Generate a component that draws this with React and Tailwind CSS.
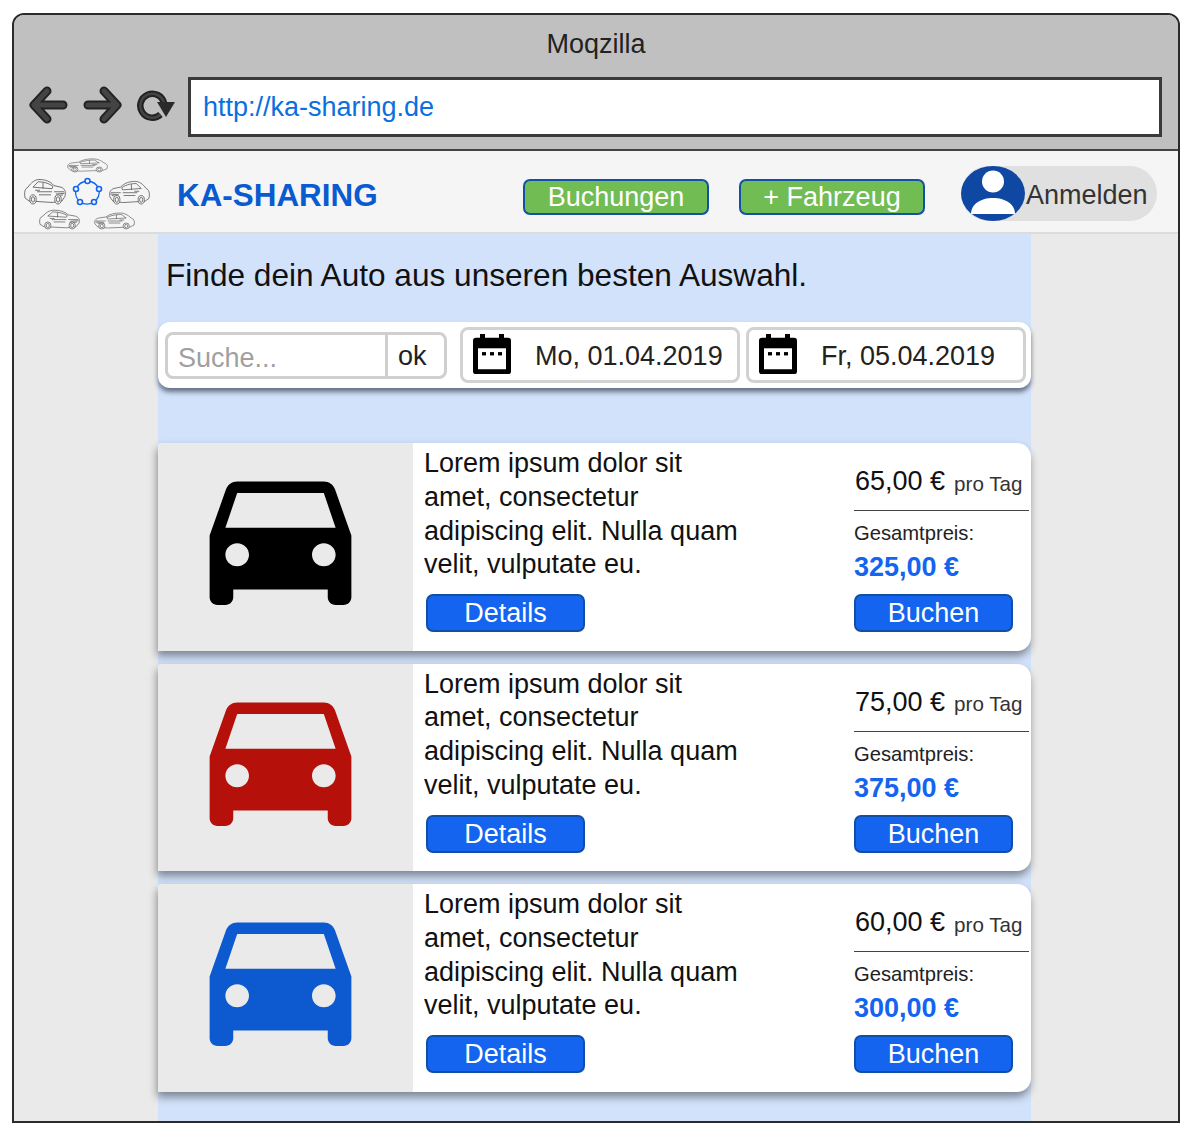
const font = { fontFamily: '"Liberation Sans", Arial, sans-serif' }

const cars = [
  { color: '#000000', perDay: '65,00 €', total: '325,00 €' },
  { color: '#b5100a', perDay: '75,00 €', total: '375,00 €' },
  { color: '#0d5ad0', perDay: '60,00 €', total: '300,00 €' },
]

function NavArrow({ flip }) {
  return (
    <svg width="40" height="38" viewBox="0 0 40 38" className={flip ? '-scale-x-100 mb-[4px]' : 'mb-[4px]'}>
      <path
        d="M18 5 L5 19 L18 33 M5 19 L34 19"
        fill="none"
        stroke="#222"
        strokeWidth="9"
        strokeLinecap="round"
        strokeLinejoin="round"
      />
      <path
        d="M18 5 L5 19 L18 33 M5 19 L34 19"
        fill="none"
        stroke="#444"
        strokeWidth="5"
        strokeLinecap="round"
        strokeLinejoin="round"
      />
    </svg>
  )
}

function Reload() {
  return (
    <svg width="40" height="36" viewBox="0 0 40 36" className="mb-[2px]">
      <path d="M27 15 A12 12 0 1 0 23.5 26.5" fill="none" stroke="#222" strokeWidth="6.5" />
      <path d="M27 15 A12 12 0 1 0 23.5 26.5" fill="none" stroke="#444" strokeWidth="2.5" />
      <path d="M20 14 L38 14 L29 29 Z" fill="#2a2a2a" />
    </svg>
  )
}

// thin outline of a car, used for the five sketches in the logo
function Sketch({ x, y, w, h, flip }) {
  const sx = w / 42
  const sy = h / 17
  const tf = flip ? `translate(${x + w} ${y}) scale(${-sx} ${sy})` : `translate(${x} ${y}) scale(${sx} ${sy})`
  return (
    <g transform={tf} fill="none" stroke="#3a3a3a" strokeWidth="0.55" strokeLinejoin="round">
      <path d="M1 12 C0 9 1 7 5 6 L12 5 C16 2 21 1 27 1 C31 1 35 3 38 6 C41 7 42 9 41 13 L37 15 L14 16 L4 15 Z" />
      <path d="M13 5.5 C18 3 24 2.5 28 2.5 L33 6 L14 7 Z" />
      <path d="M23 3 L23 7 M2 9 L12 9 M3 11 L11 12 M15 11 L27 11 M26 8 L31 8 M1.5 10 L10 10.5 M14 9 L29 9" />
      <ellipse cx="8" cy="14" rx="3.2" ry="3" fill="#f5f5f5" />
      <ellipse cx="8" cy="14" rx="1.6" ry="1.8" />
      <ellipse cx="33" cy="14" rx="3.2" ry="3" fill="#f5f5f5" />
      <ellipse cx="33" cy="14" rx="1.6" ry="1.8" />
    </g>
  )
}

function Logo() {
  return (
    <svg width="130" height="76" viewBox="23 154 130 76" className="shrink-0">
      <Sketch x={67} y={158} w={41} h={14} />
      <Sketch x={24} y={178} w={42} h={26} flip />
      <Sketch x={109} y={180} w={41} h={24} />
      <Sketch x={39} y={209} w={41} h={20} flip />
      <Sketch x={94} y={212} w={41} h={17} />
      <path
        d="M87.5 181 A13.5 13.5 0 0 1 99 189 A13.5 13.5 0 0 1 94 202 A13.5 13.5 0 0 1 80 202 A13.5 13.5 0 0 1 76 189 A13.5 13.5 0 0 1 87.5 181"
        fill="none"
        stroke="#1464f0"
        strokeWidth="1.3"
      />
      {[[87.5, 181], [99, 189], [94, 202], [80, 202], [76, 189]].map(([cx, cy]) => (
        <circle key={cx} cx={cx} cy={cy} r="2.5" fill="#f5f5f5" stroke="#1464f0" strokeWidth="1.6" />
      ))}
    </svg>
  )
}

function Avatar() {
  return (
    <svg width="64" height="55" viewBox="0 0 64 55" className="shrink-0">
      <ellipse cx="32" cy="27.5" rx="32" ry="27.5" fill="#0f48a3" />
      <circle cx="32" cy="15.5" r="11" fill="#fff" />
      <path d="M10 48 C10 38 20 32 32 32 C44 32 54 38 54 48 Z" fill="#fff" />
    </svg>
  )
}

function Calendar() {
  return (
    <svg width="40" height="40" viewBox="0 0 40 42" preserveAspectRatio="none" className="shrink-0 -mt-[2px]">
      <rect x="1" y="4" width="38" height="38" rx="3" fill="#000" />
      <rect x="6" y="15" width="28" height="22" fill="#fff" />
      <rect x="8" y="0" width="5" height="7" fill="#000" />
      <rect x="27" y="0" width="5" height="7" fill="#000" />
      <rect x="10" y="19" width="4" height="3.5" fill="#000" />
      <rect x="18" y="19" width="4" height="3.5" fill="#000" />
      <rect x="26" y="19" width="4" height="3.5" fill="#000" />
    </svg>
  )
}

function CarIcon({ color }) {
  return (
    <svg width="189" height="185" viewBox="0 0 24 24" preserveAspectRatio="none" fill={color}>
      <path d="M18.92 6.01C18.72 5.42 18.16 5 17.5 5h-11c-.66 0-1.21.42-1.42 1.01L3 12v8c0 .55.45 1 1 1h1c.55 0 1-.45 1-1v-1h12v1c0 .55.45 1 1 1h1c.55 0 1-.45 1-1v-8l-2.08-5.99zM6.5 16c-.83 0-1.5-.67-1.5-1.5S5.67 13 6.5 13s1.5.67 1.5 1.5S7.33 16 6.5 16zm11 0c-.83 0-1.5-.67-1.5-1.5s.67-1.5 1.5-1.5 1.5.67 1.5 1.5-.67 1.5-1.5 1.5zM5 11l1.5-4.5h11L19 11H5z" />
    </svg>
  )
}

function BlueButton({ children }) {
  return (
    <button className="w-[159px] h-[38px] rounded-[7px] bg-[#1464f0] border-2 border-[#0f4fa8] text-white text-[27px] leading-[34px]">
      {children}
    </button>
  )
}

function GreenButton({ children }) {
  return (
    <button className="w-[186px] h-[36px] rounded-[7px] bg-[#72bc54] border-2 border-[#0f52a8] text-white text-[27px] leading-[33px]">
      {children}
    </button>
  )
}

function CarCard({ car }) {
  return (
    <div className="flex h-[207.5px] rounded-r-[14px] rounded-tl-[4px] bg-white shadow-[-1px_5px_9px_rgba(0,0,0,0.42)] overflow-hidden">
      <div className="w-[255px] shrink-0 bg-[#eaeaea] flex items-start pl-[28px]">
        <CarIcon color={car.color} />
      </div>
      <div className="w-[441px] shrink-0 pl-[11px] pt-[4px]">
        <p className="text-[27px] leading-[33.8px] text-[#111] h-[147px]">
          Lorem ipsum dolor sit
          <br />
          amet, consectetur
          <br />
          adipiscing elit. Nulla quam
          <br />
          velit, vulputate eu.
        </p>
        <div className="pl-[2px]">
          <BlueButton>Details</BlueButton>
        </div>
      </div>
      <div className="w-[175px] shrink-0">
        <div className="h-[68px] border-b border-[#444] flex items-center pl-px pt-[10px] text-[#111] whitespace-nowrap">
          <span className="text-[27px]">{car.perDay}</span>
          <span className="text-[20.6px] ml-[9px] mt-[5px] text-[#333]">pro Tag</span>
        </div>
        <div className="text-[20.2px] leading-[24px] text-[#222] mt-[10px]">Gesamtpreis:</div>
        <div className="text-[27px] leading-[32px] font-bold text-[#1464f0] mt-[6px] mb-[11px]">{car.total}</div>
        <BlueButton>Buchen</BlueButton>
      </div>
    </div>
  )
}

export default function App() {
  return (
    <div className="w-[1193px] h-[1133px] bg-white pt-[13px] pl-[12px] overflow-hidden" style={font}>
      <div className="w-[1168px] h-[1110px] border-2 border-[#2b2b2b] rounded-t-[12px] flex flex-col overflow-hidden">
        {/* Browser chrome */}
        <div className="h-[136px] shrink-0 bg-[#c0c0c0] border-b-2 border-[#444]">
          <div className="text-center text-[27px] leading-[32px] pt-[13px] text-[#222]">Moqzilla</div>
          <div className="flex items-center pl-[15px] mt-[17px]">
            <NavArrow />
            <div className="w-[13px]" />
            <NavArrow flip />
            <div className="w-[15px]" />
            <Reload />
            <div className="ml-[11px] w-[974px] h-[60px] bg-white border-[3px] border-[#3a3a3a] flex items-center pl-[12px] text-[27px] text-[#0a6fe0]">
              http://ka-sharing.de
            </div>
          </div>
        </div>

        {/* Site nav */}
        <div className="h-[83px] shrink-0 -ml-[2px] bg-[#f5f5f5] border-b-2 border-[#dcdcdc] flex items-center pl-[11px]">
          <Logo />
          <div className="w-[241px] ml-[24px] mt-[8px] text-[31.4px] font-bold text-[#0a5ad0]">KA-SHARING</div>
          <div className="ml-[105px] mt-[10px] flex gap-[30px]">
            <GreenButton>Buchungen</GreenButton>
            <GreenButton>+ Fahrzeug</GreenButton>
          </div>
          <div className="ml-[36px] mt-[4px] w-[196px] h-[55px] rounded-full bg-[#e0e0e0] flex items-center">
            <Avatar />
            <span className="text-[27px] text-[#333] ml-px pt-[3px]">Anmelden</span>
          </div>
        </div>

        {/* Page */}
        <div className="flex-1 bg-[#eaeaea] pl-[144px]">
          <div className="w-[873px] h-full bg-[#d2e2fa]">
            <div className="pl-[8px] pt-[21px] text-[31.6px] leading-[40px] text-[#111]">
              Finde dein Auto aus unseren besten Auswahl.
            </div>
            <div className="mt-[27px] h-[66px] bg-white rounded-[12px] shadow-[0_4px_5px_rgba(40,50,70,0.65)] flex items-center pl-[7px] text-[27px] text-[#222]">
              <div className="w-[282px] h-[47px] border-[3px] border-[#cfcfcf] rounded-[8px] flex items-center mt-[1px]">
                <div className="w-[220px] h-full border-r-[3px] border-[#cfcfcf] pl-[10px] pt-[6px] flex items-center text-[#a0a0a0]">
                  Suche...
                </div>
                <div className="pl-[10px] pt-[2px]">ok</div>
              </div>
              <div className="ml-[13px] w-[280px] h-[56px] border-[3px] border-[#d2d2d2] rounded-[8px] flex items-center pl-[9px]">
                <Calendar />
                <span className="ml-[23px] pt-[2px]">Mo, 01.04.2019</span>
              </div>
              <div className="ml-[6px] w-[280px] h-[56px] border-[3px] border-[#d2d2d2] rounded-[8px] flex items-center pl-[9px]">
                <Calendar />
                <span className="ml-[23px] pt-[2px]">Fr, 05.04.2019</span>
              </div>
            </div>
            <div className="mt-[55px] flex flex-col gap-[13px]">
              {cars.map((car) => (
                <CarCard key={car.total} car={car} />
              ))}
            </div>
          </div>
        </div>
      </div>
    </div>
  )
}
